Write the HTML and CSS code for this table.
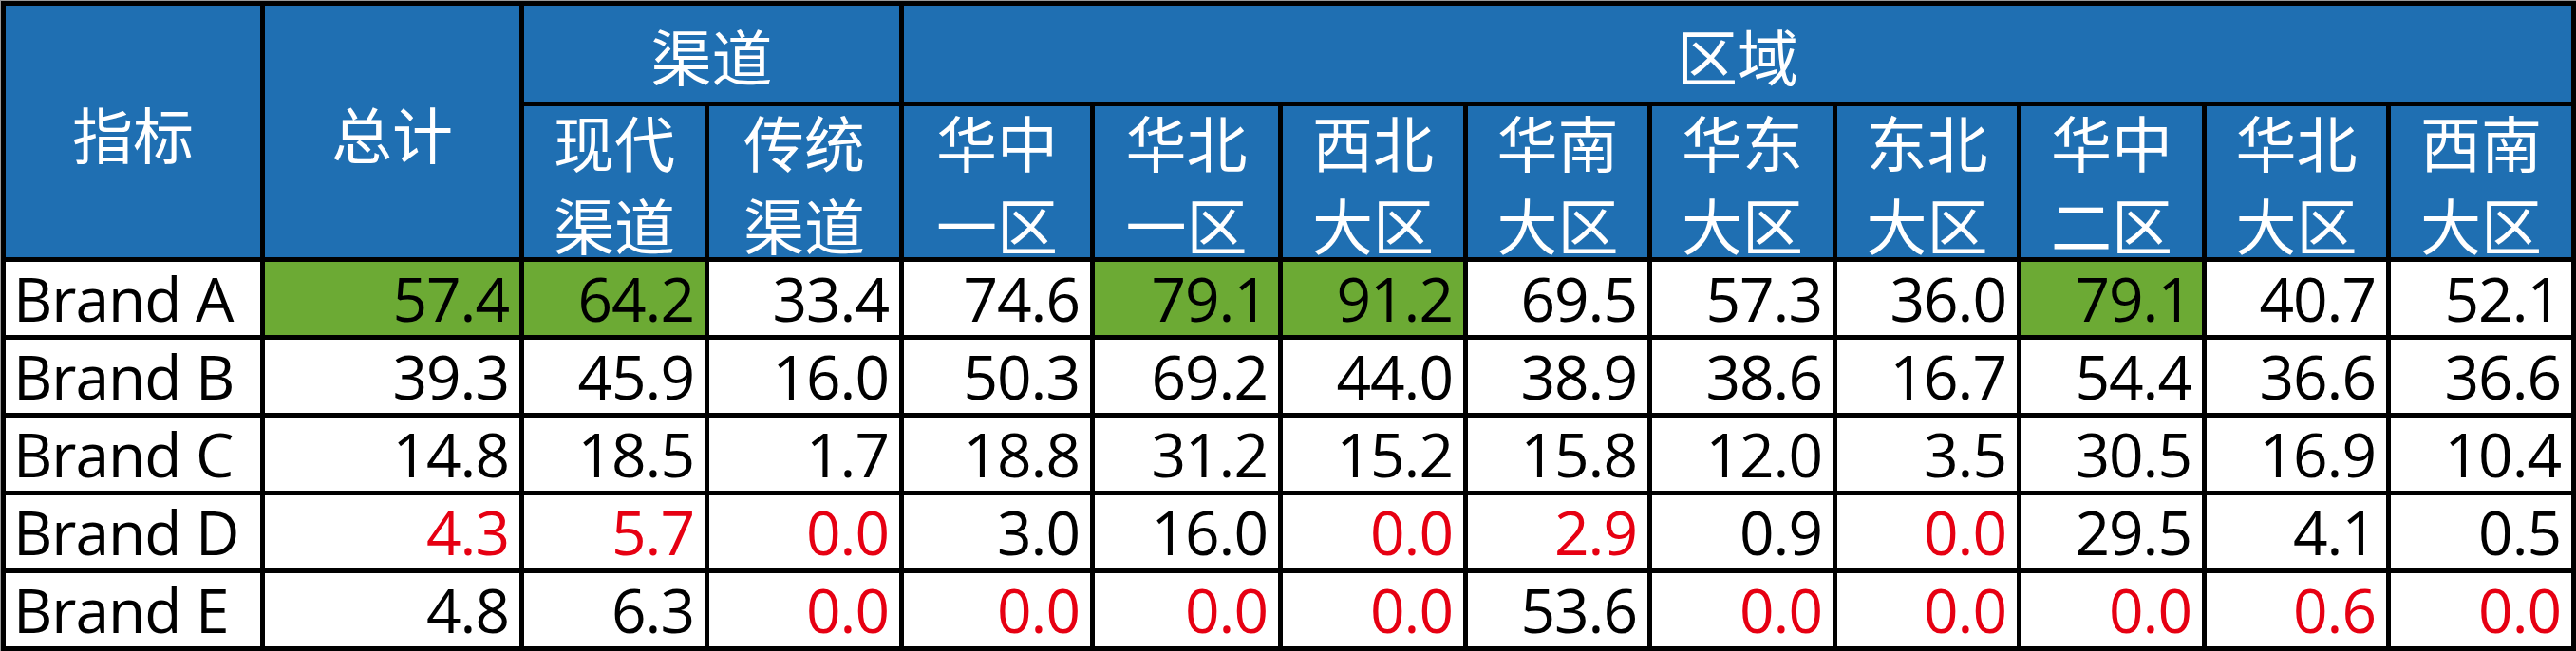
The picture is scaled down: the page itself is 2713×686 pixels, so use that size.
FILE: index.html
```html
<!DOCTYPE html>
<html lang="zh">
<head>
<meta charset="utf-8">
<title>指标表</title>
<link rel="stylesheet" href="styles.css">
</head>
<body>
<table class="sheet">
  <colgroup>
    <col class="c-wide"><col class="c-wide">
    <col class="c190"><col class="c200"><col class="c196"><col class="c193">
    <col class="c190"><col class="c189"><col class="c190"><col class="c189">
    <col class="c190"><col class="c189"><col class="c190">
  </colgroup>
  <thead>
    <tr class="h1">
      <th class="hd" rowspan="2">指标</th>
      <th class="hd" rowspan="2">总计</th>
      <th class="hd" colspan="2">渠道</th>
      <th class="hd" colspan="9">区域</th>
    </tr>
    <tr class="h2">
      <th class="hd"><div class="two">现代<br>渠道</div></th>
      <th class="hd"><div class="two">传统<br>渠道</div></th>
      <th class="hd"><div class="two">华中<br>一区</div></th>
      <th class="hd"><div class="two">华北<br>一区</div></th>
      <th class="hd"><div class="two">西北<br>大区</div></th>
      <th class="hd"><div class="two">华南<br>大区</div></th>
      <th class="hd"><div class="two">华东<br>大区</div></th>
      <th class="hd"><div class="two">东北<br>大区</div></th>
      <th class="hd"><div class="two">华中<br>二区</div></th>
      <th class="hd"><div class="two">华北<br>大区</div></th>
      <th class="hd"><div class="two">西南<br>大区</div></th>
    </tr>
  </thead>
  <tbody>
    <tr>
      <td class="lbl">Brand A</td>
      <td class="g">57.4</td><td class="g">64.2</td><td>33.4</td><td>74.6</td><td class="g">79.1</td><td class="g">91.2</td><td>69.5</td><td>57.3</td><td>36.0</td><td class="g">79.1</td><td>40.7</td><td>52.1</td>
    </tr>
    <tr>
      <td class="lbl">Brand B</td>
      <td>39.3</td><td>45.9</td><td>16.0</td><td>50.3</td><td>69.2</td><td>44.0</td><td>38.9</td><td>38.6</td><td>16.7</td><td>54.4</td><td>36.6</td><td>36.6</td>
    </tr>
    <tr>
      <td class="lbl">Brand C</td>
      <td>14.8</td><td>18.5</td><td>1.7</td><td>18.8</td><td>31.2</td><td>15.2</td><td>15.8</td><td>12.0</td><td>3.5</td><td>30.5</td><td>16.9</td><td>10.4</td>
    </tr>
    <tr>
      <td class="lbl">Brand D</td>
      <td class="r">4.3</td><td class="r">5.7</td><td class="r">0.0</td><td>3.0</td><td>16.0</td><td class="r">0.0</td><td class="r">2.9</td><td>0.9</td><td class="r">0.0</td><td>29.5</td><td>4.1</td><td>0.5</td>
    </tr>
    <tr>
      <td class="lbl">Brand E</td>
      <td>4.8</td><td>6.3</td><td class="r">0.0</td><td class="r">0.0</td><td class="r">0.0</td><td class="r">0.0</td><td>53.6</td><td class="r">0.0</td><td class="r">0.0</td><td class="r">0.0</td><td class="r">0.6</td><td class="r">0.0</td>
    </tr>
  </tbody>
</table>
</body>
</html>
```

FILE: styles.css
```css
html, body {
  margin: 0;
  padding: 0;
  background: #ffffff;
}

.sheet {
  border-collapse: separate;
  border-spacing: 5px;
  background: #000000;
  table-layout: fixed;
  width: 2713px;
  border-top: 1px solid #9a9a9a;
  border-left: 1px solid #9a9a9a;
  border-right: 0;
  border-bottom: 0;
  font-family: "Open Sans", "Noto Sans CJK SC", sans-serif;
  font-size: 64px;
}

.c-wide { width: 268px; }
.c200 { width: 200px; }
.c196 { width: 196px; }
.c193 { width: 193px; }
.c190 { width: 190px; }
.c189 { width: 189px; }

.sheet th,
.sheet td {
  padding: 0;
  overflow: visible;
}

.hd {
  background: #1f6fb2;
  color: #ffffff;
  font-family: "Noto Sans CJK SC", sans-serif;
  font-weight: 400;
  font-size: 64px;
  line-height: 1;
  text-align: center;
  vertical-align: middle;
}

.h1 th { height: 101px; }
.h2 th { height: 159px; }

.two {
  height: 159px;
  display: flex;
  flex-direction: column;
  justify-content: center;
  line-height: 87px;
  white-space: nowrap;
}

.sheet tbody td {
  height: 77px;
  background: #ffffff;
  color: #000000;
  text-align: right;
  padding-right: 11px;
  line-height: 1;
  letter-spacing: -1px;
  vertical-align: middle;
  white-space: nowrap;
}

.sheet tbody td.lbl {
  text-align: left;
  padding-left: 8px;
  padding-right: 0;
}

.sheet tbody td.g {
  background: #6caa34;
}

.sheet tbody td.r {
  color: #e60012;
}
```
